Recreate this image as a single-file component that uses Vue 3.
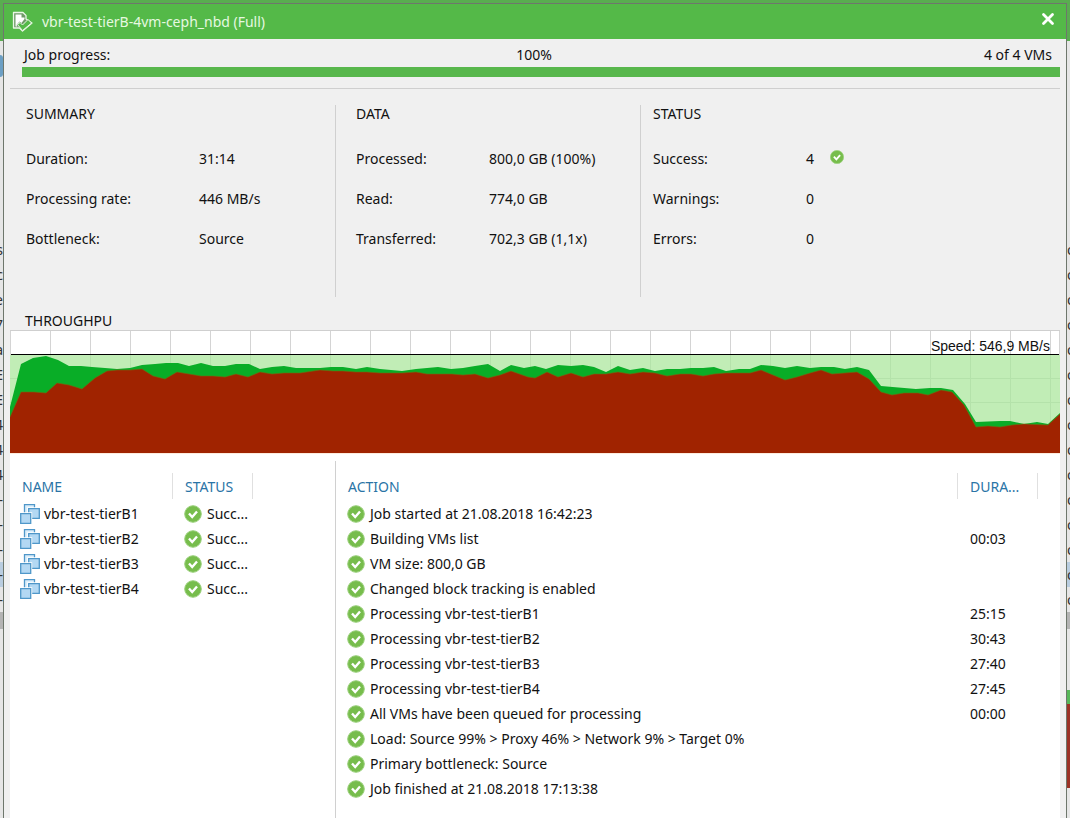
<script setup>
const stats = [
  { title: 'SUMMARY', key: 'summary', rows: [['Duration:', '31:14'], ['Processing rate:', '446 MB/s'], ['Bottleneck:', 'Source']] },
  { title: 'DATA', key: 'data', rows: [['Processed:', '800,0 GB (100%)'], ['Read:', '774,0 GB'], ['Transferred:', '702,3 GB (1,1x)']] },
  { title: 'STATUS', key: 'status', rows: [['Success:', '4'], ['Warnings:', '0'], ['Errors:', '0']] },
]
const vms = ['vbr-test-tierB1', 'vbr-test-tierB2', 'vbr-test-tierB3', 'vbr-test-tierB4']
const actions = [
  ['Job started at 21.08.2018 16:42:23', ''],
  ['Building VMs list', '00:03'],
  ['VM size: 800,0 GB', ''],
  ['Changed block tracking is enabled', ''],
  ['Processing vbr-test-tierB1', '25:15'],
  ['Processing vbr-test-tierB2', '30:43'],
  ['Processing vbr-test-tierB3', '27:40'],
  ['Processing vbr-test-tierB4', '27:45'],
  ['All VMs have been queued for processing', '00:00'],
  ['Load: Source 99% > Proxy 46% > Network 9% > Target 0%', ''],
  ['Primary bottleneck: Source', ''],
  ['Job finished at 21.08.2018 17:13:38', ''],
]
const gridX = Array.from({ length: 26 }, (_, i) => 40 + i * 40)
const gridY = [47, 71, 95]
const read = '0,76 11,33 23,27 36,25 48,29 59,35 71,35 82,36 95,37 107,38 120,37 132,34 145,33 156,32 168,32 179,35 191,32 203,35 215,35 226,33 239,33 250,38 262,36 274,35 286,37 310,37 321,36 333,36 346,38 357,36 370,38 392,40 406,38 417,37 428,36 441,38 453,37 465,35 478,33 490,40 501,34 514,37 525,35 536,38 548,34 561,35 573,34 584,36 596,41 608,35 620,39 633,37 645,40 657,38 670,38 681,37 693,37 704,36 716,40 729,38 740,38 751,34 763,35 775,37 787,35 800,37 811,36 824,36 835,38 847,36 859,39 871,55 906,58 920,57 931,57 943,59 955,73 966,91 990,90 1000,90 1014,93 1027,91 1038,93 1050,82'
const write = '0,86 11,61 24,61 36,62 47,52 59,54 72,58 85,47 97,40 107,39 120,39 132,38 143,45 155,48 167,41 179,43 191,45 203,45 215,46 226,43 238,46 250,41 262,43 274,42 290,42 310,39 323,40 333,40 346,41 357,41 370,42 392,42 406,41 417,43 430,43 442,43 453,44 465,43 478,47 490,44 501,40 518,46 525,47 537,41 548,46 561,42 573,46 584,43 596,43 608,41 620,43 633,41 645,42 657,45 670,43 681,43 693,45 704,43 716,42 740,42 751,39 775,49 787,46 800,42 811,39 822,43 847,41 859,48 871,61 882,64 894,62 908,62 918,64 931,59 942,61 954,74 966,96 978,95 990,96 1002,94 1014,93 1038,94 1050,83'
const area = (line) => `0,122 ${line} 1050,122`
const leftRows = ['s', 'c', 'e', '7', 'a', 'E', 'E', '4', '4', '4', '-', '-', '-', '-', '-']
</script>

<template>
  <div class="desktop">
    <div class="behind" aria-hidden="true">
      <div class="behind-bar"></div>
      <div class="behind-rows left">
        <span v-for="(t, i) in leftRows" :key="i" :class="{ picked: i === 13 }">{{ t }}</span>
        <i></i>
      </div>
      <div class="behind-rows right">
        <span v-for="i in 15" :key="i" :class="{ picked: i === 14 }">o</span>
        <i></i>
      </div>
      <div class="behind-chart"></div>
      <div class="behind-logo"></div>
    </div>

    <main class="dialog">
      <header class="titlebar">
        <svg class="job-icon" viewBox="0 0 22 22" aria-hidden="true">
          <path d="M1.500 1.500h9.500l3 3v3.500l6 4-9.500 8-3-3H1.500z" fill="#6f9a68" stroke="#eaf6e6" stroke-width="1.300" stroke-linejoin="round" />
          <path d="M3.500 3.500h6v3h3v1.500L9.500 12l-2-1.500L4.500 14l1 1.500h-2z" fill="#fff" />
          <path d="M5.500 13.500l2.500-2 2.500 2.500 5.500-5.500 3.500 3.500-9 7.500z" fill="#55b949" stroke="#eaf6e6" stroke-width="1" stroke-linejoin="round" />
        </svg>
        <h1>vbr-test-tierB-4vm-ceph_nbd (Full)</h1>
        <button class="close" type="button" aria-label="Close">
          <svg viewBox="0 0 14 14"><path d="M2.500 2.500l9 9M11.500 2.500l-9 9" stroke="#fff" stroke-width="2.800" stroke-linecap="round" /></svg>
        </button>
      </header>

      <section class="progress">
        <div class="progress-text">
          <label for="job-progress">Job progress:</label>
          <span>100%</span>
          <span class="end">4 of 4 VMs</span>
        </div>
        <progress id="job-progress" value="100" max="100"></progress>
      </section>

      <section class="stats">
        <div v-for="group in stats" :key="group.key" class="stat" :class="group.key">
          <h2>{{ group.title }}</h2>
          <dl>
            <template v-for="(row, i) in group.rows" :key="row[0]">
              <dt>{{ row[0] }}</dt>
              <dd>
                {{ row[1] }}
                <svg v-if="group.key === 'status' && i === 0" class="ok small" viewBox="0 0 18 18" aria-hidden="true">
                  <circle cx="9" cy="9" r="8.500" /><path d="M5 8.500l3.200 3.500L13 6.500" />
                </svg>
              </dd>
            </template>
          </dl>
        </div>
      </section>

      <section class="throughput">
        <h2>THROUGHPU</h2>
        <div class="chart">
          <svg viewBox="0 0 1050 122" preserveAspectRatio="none" aria-hidden="true">
            <rect width="1050" height="122" fill="#fff" />
            <rect y="24" width="1050" height="98" fill="#c1edb6" />
            <g class="grid">
              <path v-for="x in gridX" :key="x" :d="`M${x} 0V24`" />
              <path v-for="x in gridX" :key="x" class="faint" :d="`M${x} 24V122`" />
              <path v-for="y in gridY" :key="y" class="faint" :d="`M0 ${y}H1050`" />
            </g>
            <polygon :points="area(read)" fill="#09ad27" />
            <polygon :points="area(write)" fill="#a02300" />
            <polyline :points="write" fill="none" stroke="#6f6d10" stroke-width="1" opacity="0.6" />
            <rect y="23" width="1050" height="1" fill="#000" />
            <path class="edge" d="M0 0V24M1049 0V24" />
          </svg>
          <p>Speed: 546,9 MB/s</p>
        </div>
      </section>

      <section class="details">
        <div class="pane vms">
          <table>
            <colgroup><col class="c-name" /><col class="c-state" /><col /></colgroup>
            <thead>
              <tr><th scope="col"><span>NAME</span></th><th scope="col"><span>STATUS</span></th><td></td></tr>
            </thead>
            <tbody>
              <tr v-for="vm in vms" :key="vm">
                <td>
                  <div class="cell">
                    <svg class="vm" viewBox="0 0 20 20" aria-hidden="true">
                      <g fill="#b3d8f3" stroke="#4f97c9" stroke-width="1.300">
                        <path d="M4.500.700h10v9h-10z" fill="#dceefa" />
                        <path d="M8.700 4.700h10.600v9.600H8.700z" stroke="#fff" stroke-width="3" />
                        <path d="M8.700 4.700h10.600v9.600H8.700z" />
                        <path d="M.700 9.700h10v9.600H.700z" stroke="#fff" stroke-width="3" />
                        <path d="M.700 9.700h10v9.600H.700z" />
                      </g>
                    </svg>
                    <span>{{ vm }}</span>
                  </div>
                </td>
                <td>
                  <div class="cell">
                    <svg class="ok" viewBox="0 0 18 18" aria-hidden="true"><circle cx="9" cy="9" r="8.300" /><path d="M5 8.500l3.200 3.500L13 6.500" /></svg>
                    <span>Succ...</span>
                  </div>
                </td>
                <td></td>
              </tr>
            </tbody>
          </table>
        </div>
        <div class="pane log">
          <table>
            <colgroup><col /><col class="c-time" /><col class="c-rest" /></colgroup>
            <thead>
              <tr><th scope="col"><span>ACTION</span></th><th scope="col"><span>DURA...</span></th><td></td></tr>
            </thead>
            <tbody>
              <tr v-for="a in actions" :key="a[0]">
                <td>
                  <div class="cell">
                    <svg class="ok" viewBox="0 0 18 18" aria-hidden="true"><circle cx="9" cy="9" r="8.300" /><path d="M5 8.500l3.200 3.500L13 6.500" /></svg>
                    <span>{{ a[0] }}</span>
                  </div>
                </td>
                <td class="time">{{ a[1] }}</td>
                <td></td>
              </tr>
            </tbody>
          </table>
        </div>
      </section>
    </main>
  </div>
</template>

<style>
html, body, #app { height: 100%; }
body { margin: 0; overflow: hidden; }
</style>

<style scoped>
* { box-sizing: border-box; }
.desktop {
  position: relative;
  min-height: 100%;
  display: flex;
  padding: 3px 3px 0 3px;
  background: #e6e6e6;
  color: #111;
  font: 14px/20px "Noto Sans", "Open Sans", sans-serif;
}
h1, h2, p, dl, dd { margin: 0; font: inherit; }

.behind { position: absolute; inset: 0; overflow: hidden; }
.behind-bar { height: 41px; background: #59ad50; }
.behind-logo { position: absolute; left: 0; top: 55px; width: 3px; height: 22px; background: #6c9fc4; border-radius: 0 3px 3px 0; }
.behind-rows { position: absolute; top: 237px; width: 3px; overflow: hidden; }
.behind-rows.left { left: 0; }
.behind-rows.right { right: 0; }
.behind-rows span { display: flex; height: 25px; line-height: 25px; color: #333; }
.behind-rows.left span { justify-content: flex-end; }
.behind-rows .picked { background: #b9cde0; }
.behind-rows i { display: block; height: 17px; background: #b4b4b4; }
.behind-chart { position: absolute; right: 0; top: 690px; width: 3px; height: 98px; background: #9c3226; border-top: 14px solid #58b85a; }

.dialog {
  position: relative;
  flex: 1;
  min-width: 0;
  display: flex;
  flex-direction: column;
  border: 1px solid #6e776c;
  border-bottom: 0;
  background: #f0f0f0;
}
.titlebar {
  display: flex;
  align-items: center;
  height: 35px;
  padding: 0 11px 0 8px;
  background: #54b948;
  color: #e6f8e0;
}
.job-icon { width: 22px; height: 22px; margin-right: 8px; }
.titlebar h1 { flex: 1; }
.close { width: 14px; height: 14px; margin-bottom: 5px; padding: 0; border: 0; background: none; }
.close svg { display: block; }

.progress { margin: 0 6px; padding: 6px 0 11px; border-bottom: 1px solid #cfcfcf; }
.progress-text { display: grid; grid-template-columns: 1fr auto 1fr; padding: 0 8px 0 6px; }
.progress-text label { padding-left: 8px; }
.end { text-align: right; }
progress {
  display: block;
  width: calc(100% - 12px);
  height: 10px;
  margin: 2px 0 0 12px;
  border: 0;
  appearance: none;
  background: #58b74c;
}
progress::-webkit-progress-bar { background: #ddd; }
progress::-webkit-progress-value { background: #58b74c; }

.stats { display: grid; grid-template-columns: 326fr 305fr 419fr; margin: 16px 6px 0; }
.stat { height: 192px; padding-left: 16px; border-right: 1px solid #d0d0d0; }
.stat.data { padding-left: 20px; }
.stat.status { padding-left: 12px; border-right: 0; }
.stat h2 { height: 34px; line-height: 18px; }
.stat dl { display: grid; grid-template-columns: 173px 1fr; grid-auto-rows: 40px; line-height: 40px; }
.stat.data dl { grid-template-columns: 133px 1fr; }
.stat.status dl { grid-template-columns: 153px 1fr; }
.stat dd { display: flex; align-items: center; gap: 16px; }

.throughput { margin: 14px 6px 0; }
.throughput h2 { height: 19px; padding-left: 15px; }
.chart { position: relative; border-top: 1px solid #cfcfcf; }
.chart svg { display: block; width: 100%; height: 122px; }
.chart p { position: absolute; top: 5px; right: 10px; font: 14px/20px "Liberation Sans", sans-serif; color: #111; }
.grid path, .edge { stroke: #d4d4d4; stroke-width: 1; shape-rendering: crispEdges; }
.grid .faint { stroke: #b4e2aa; }

.details { flex: 1; display: grid; grid-template-columns: 326fr 724fr; margin: 0 6px; padding-top: 7px; border-top: 1px solid #fdebdd; background: #fff; }
.pane { padding-top: 12px; }
.vms { border-right: 1px solid #d0d0d0; }
table { width: 100%; table-layout: fixed; border-collapse: collapse; }
th, td { height: 25px; padding: 0; text-align: left; font-weight: normal; }
thead th, thead td { height: 28px; vertical-align: top; }
th { color: #2a74a6; }
th span { display: block; height: 26px; line-height: 28px; padding-left: 12px; border-right: 1px solid #e0e0e0; }
.c-name { width: 163px; }
.c-state, .c-time { width: 80px; }
.c-rest { width: 22px; }
.cell { display: flex; align-items: center; gap: 5px; height: 25px; padding-left: 11px; white-space: nowrap; }
.vms td:first-child .cell { padding-left: 10px; gap: 4px; }
.time { padding-left: 12px; }
.ok { width: 18px; height: 18px; flex: none; }
.ok.small { width: 14px; height: 14px; margin-bottom: 4px; }
.ok circle { fill: #77bd4c; stroke: #9bd07c; stroke-width: 1; }
.ok path { fill: none; stroke: #fff; stroke-width: 2.4; }
.vm { width: 20px; height: 20px; flex: none; }
</style>
